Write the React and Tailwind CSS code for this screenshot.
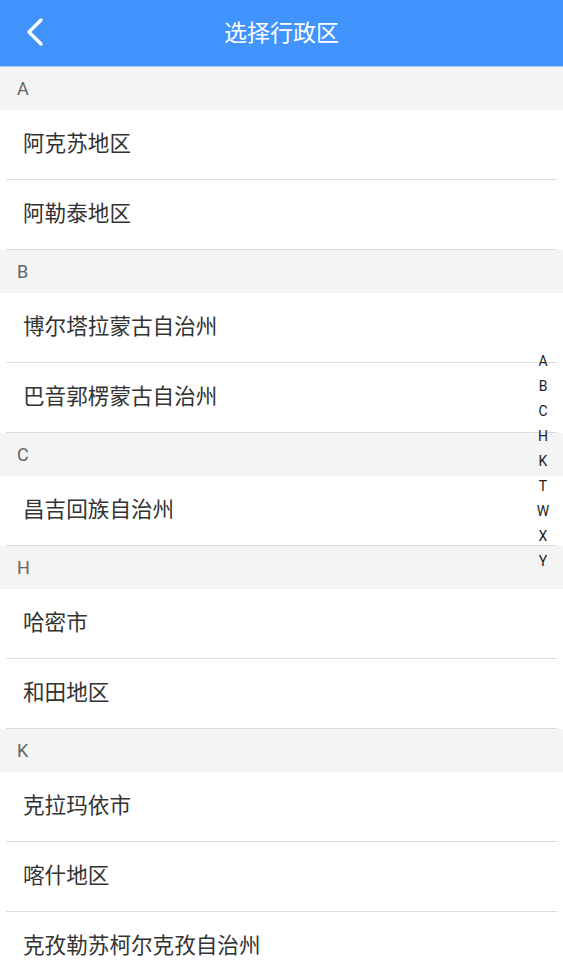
import React from "react";

const groups = [
  { letter: "A", items: ["阿克苏地区", "阿勒泰地区"] },
  { letter: "B", items: ["博尔塔拉蒙古自治州", "巴音郭楞蒙古自治州"] },
  { letter: "C", items: ["昌吉回族自治州"] },
  { letter: "H", items: ["哈密市", "和田地区"] },
  { letter: "K", items: ["克拉玛依市", "喀什地区", "克孜勒苏柯尔克孜自治州"] },
];

const indexLetters = ["A", "B", "C", "H", "K", "T", "W", "X", "Y"];

export default function App() {
  return (
    <div
      className="relative w-[563px] h-[962px] overflow-hidden bg-white"
      style={{ fontFamily: 'Roboto, "Noto Sans CJK SC", sans-serif' }}
    >
      {/* HEADER */}
      <div className="relative flex items-center justify-center h-[67px] bg-[#4194fe] border-b border-[#a9ccfb]">
        <svg
          className="absolute left-[24px] top-[17px]"
          width="22"
          height="30"
          viewBox="0 0 22 30"
          fill="none"
          stroke="white"
          strokeWidth="3.2"
          strokeLinecap="round"
          strokeLinejoin="round"
        >
          <path d="M17 3 L5 15 L17 27" />
        </svg>
        <h1 className="text-white text-[23px] leading-none">选择行政区</h1>
      </div>

      {/* LIST */}
      <div className="flex flex-col">
        {groups.map((g) => (
          <div key={g.letter} className="flex flex-col">
            <div className="flex items-center h-[43px] bg-[#f4f4f4] pl-[17px] text-[18px] text-[#666]">
              {g.letter}
            </div>
            {g.items.map((name) => (
              <div key={name} className="flex flex-col">
                <div className="flex items-center h-[69px] pl-[23px] text-[21.6px] text-[#333]">
                  {name}
                </div>
                <div className="mx-[6px] h-px bg-[#dcdcdc]" />
              </div>
            ))}
          </div>
        ))}
      </div>

      {/* INDEX BAR */}
      <div className="absolute right-[8px] top-[349px] flex flex-col items-center w-[24px]">
        {indexLetters.map((l) => (
          <div key={l} className="h-[25px] flex items-center justify-center text-[14px] text-[#222]">
            {l}
          </div>
        ))}
      </div>
    </div>
  );
}
